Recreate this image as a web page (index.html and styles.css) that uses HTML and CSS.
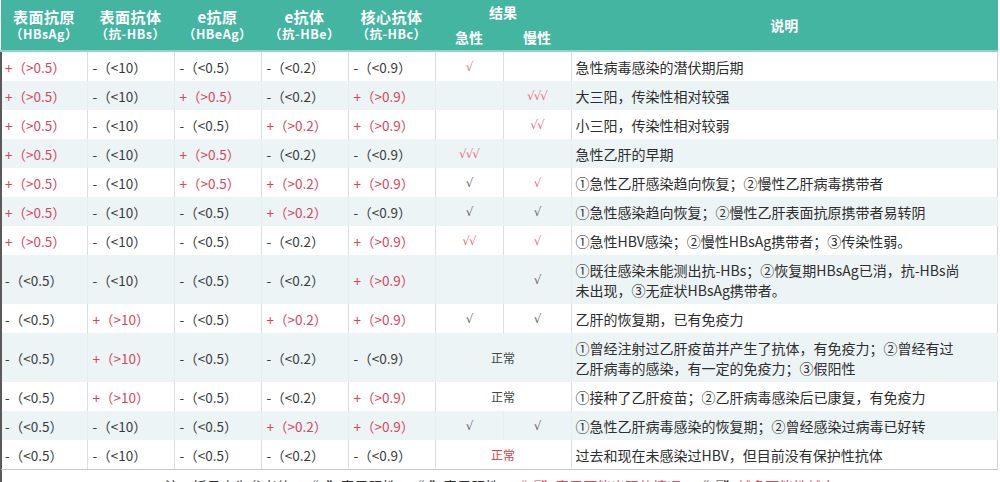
FILE: index.html
```html
<!DOCTYPE html>
<html lang="zh-CN">
<head>
<meta charset="utf-8">
<title>乙肝五项结果说明</title>
<link rel="stylesheet" href="styles.css">
</head>
<body>
<table class="tbl">
  <colgroup>
    <col class="c-val1"><col class="c-val"><col class="c-val"><col class="c-val"><col class="c-val">
    <col class="c-chk"><col class="c-chk"><col class="c-desc">
  </colgroup>
  <thead>
    <tr class="h1">
      <th rowspan="2" class="hd"><span class="hd-main">表面抗原</span><span class="hd-sub">（HBsAg）</span></th>
      <th rowspan="2" class="hd"><span class="hd-main">表面抗体</span><span class="hd-sub">（抗-HBs）</span></th>
      <th rowspan="2" class="hd"><span class="hd-main">e抗原</span><span class="hd-sub">（HBeAg）</span></th>
      <th rowspan="2" class="hd"><span class="hd-main">e抗体</span><span class="hd-sub">（抗-HBe）</span></th>
      <th rowspan="2" class="hd"><span class="hd-main">核心抗体</span><span class="hd-sub">（抗-HBc）</span></th>
      <th colspan="2" class="hd-top">结果</th>
      <th rowspan="2" class="hd-desc">说明</th>
    </tr>
    <tr class="h2">
      <th class="hd-bot">急性</th>
      <th class="hd-bot">慢性</th>
    </tr>
  </thead>
  <tbody>
    <tr>
      <td class="pos">+（>0.5）</td><td>-（<10）</td><td>-（<0.5）</td><td>-（<0.2）</td><td>-（<0.9）</td>
      <td class="chk red">√</td><td class="chk"></td>
      <td class="desc">急性病毒感染的潜伏期后期</td>
    </tr>
    <tr>
      <td class="pos">+（>0.5）</td><td>-（<10）</td><td class="pos">+（>0.5）</td><td>-（<0.2）</td><td class="pos">+（>0.9）</td>
      <td class="chk"></td><td class="chk red">√√√</td>
      <td class="desc">大三阳，传染性相对较强</td>
    </tr>
    <tr>
      <td class="pos">+（>0.5）</td><td>-（<10）</td><td>-（<0.5）</td><td class="pos">+（>0.2）</td><td class="pos">+（>0.9）</td>
      <td class="chk"></td><td class="chk red">√√</td>
      <td class="desc">小三阳，传染性相对较弱</td>
    </tr>
    <tr>
      <td class="pos">+（>0.5）</td><td>-（<10）</td><td class="pos">+（>0.5）</td><td>-（<0.2）</td><td>-（<0.9）</td>
      <td class="chk red">√√√</td><td class="chk"></td>
      <td class="desc">急性乙肝的早期</td>
    </tr>
    <tr>
      <td class="pos">+（>0.5）</td><td>-（<10）</td><td class="pos">+（>0.5）</td><td class="pos">+（>0.2）</td><td class="pos">+（>0.9）</td>
      <td class="chk">√</td><td class="chk red">√</td>
      <td class="desc">①急性乙肝感染趋向恢复；②慢性乙肝病毒携带者</td>
    </tr>
    <tr>
      <td class="pos">+（>0.5）</td><td>-（<10）</td><td>-（<0.5）</td><td class="pos">+（>0.2）</td><td>-（<0.9）</td>
      <td class="chk">√</td><td class="chk">√</td>
      <td class="desc">①急性感染趋向恢复；②慢性乙肝表面抗原携带者易转阴</td>
    </tr>
    <tr>
      <td class="pos">+（>0.5）</td><td>-（<10）</td><td>-（<0.5）</td><td>-（<0.2）</td><td class="pos">+（>0.9）</td>
      <td class="chk red">√√</td><td class="chk red">√</td>
      <td class="desc">①急性HBV感染；②慢性HBsAg携带者；③传染性弱。</td>
    </tr>
    <tr class="tall">
      <td>-（<0.5）</td><td>-（<10）</td><td>-（<0.5）</td><td>-（<0.2）</td><td class="pos">+（>0.9）</td>
      <td class="chk"></td><td class="chk">√</td>
      <td class="desc">①既往感染未能测出抗-HBs；②恢复期HBsAg已消，抗-HBs尚<br>未出现，③无症状HBsAg携带者。</td>
    </tr>
    <tr>
      <td>-（<0.5）</td><td class="pos">+（>10）</td><td>-（<0.5）</td><td class="pos">+（>0.2）</td><td class="pos">+（>0.9）</td>
      <td class="chk">√</td><td class="chk">√</td>
      <td class="desc">乙肝的恢复期，已有免疫力</td>
    </tr>
    <tr class="tall">
      <td>-（<0.5）</td><td class="pos">+（>10）</td><td>-（<0.5）</td><td>-（<0.2）</td><td>-（<0.9）</td>
      <td class="chk zc" colspan="2">正常</td>
      <td class="desc">①曾经注射过乙肝疫苗并产生了抗体，有免疫力；②曾经有过<br>乙肝病毒的感染，有一定的免疫力；③假阳性</td>
    </tr>
    <tr>
      <td>-（<0.5）</td><td class="pos">+（>10）</td><td>-（<0.5）</td><td>-（<0.2）</td><td class="pos">+（>0.9）</td>
      <td class="chk zc" colspan="2">正常</td>
      <td class="desc">①接种了乙肝疫苗；②乙肝病毒感染后已康复，有免疫力</td>
    </tr>
    <tr>
      <td>-（<0.5）</td><td>-（<10）</td><td>-（<0.5）</td><td class="pos">+（>0.2）</td><td class="pos">+（>0.9）</td>
      <td class="chk">√</td><td class="chk">√</td>
      <td class="desc">①急性乙肝病毒感染的恢复期；②曾经感染过病毒已好转</td>
    </tr>
    <tr>
      <td>-（<0.5）</td><td>-（<10）</td><td>-（<0.5）</td><td>-（<0.2）</td><td>-（<0.9）</td>
      <td class="chk zc red-strong" colspan="2">正常</td>
      <td class="desc">过去和现在未感染过HBV，但目前没有保护性抗体</td>
    </tr>
  </tbody>
</table>
<div class="note">注：括号内为参考值，“+”表示阳性，“-”表示阴性，<span class="note-red">“√”表示可能出现的情况，</span>“√”<span class="note-red">越多可能性越大</span></div>
</body>
</html>
```

FILE: styles.css
```css
html, body {
  margin: 0;
  padding: 0;
  background: #ffffff;
}

body {
  font-family: "Noto Sans CJK SC", "Noto Sans", sans-serif;
  color: #333333;
  overflow: hidden;
  text-spacing-trim: space-all;
}

.tbl {
  width: 998px;
  border-collapse: collapse;
  table-layout: fixed;
}

.c-val1 { width: 86px; }
.c-val { width: 87px; }
.c-chk { width: 68px; }
.c-desc { width: auto; }

thead th {
  background: #44b5a1;
  color: #ffffff;
  font-weight: 700;
  padding: 0;
  text-align: center;
  vertical-align: middle;
}

.h1 th[rowspan] { border-bottom: 2px solid #8ed5c6; }

.hd-main {
  display: block;
  font-size: 15px;
  line-height: 17px;
  letter-spacing: 0.5px;
}

.hd-sub {
  display: block;
  font-size: 12.5px;
  line-height: 17px;
  letter-spacing: 0.5px;
}

.hd-top {
  height: 20px;
  font-size: 14px;
  line-height: 16px;
  vertical-align: bottom;
  padding-bottom: 4px;
}

.hd-bot {
  height: 21px;
  font-size: 14px;
  line-height: 16px;
  vertical-align: top;
  padding-top: 5px;
  border-bottom: 2px solid #8ed5c6;
}

.hd-desc {
  font-size: 14px;
}

tbody td {
  height: 29px;
  padding: 0 3px 0 5px;
  font-size: 13.5px;
  line-height: 20px;
  color: #3a3a3a;
  white-space: nowrap;
  border-right: 1px solid #dcdfe2;
  vertical-align: middle;
}

tbody td:first-child {
  border-left: 2px solid #5a5a5a;
  padding-left: 3px;
}

tbody tr:nth-child(even) {
  background: #edf4f6;
}

tbody tr:nth-child(even) td {
  border-right-color: #e6eef1;
}

tbody tr:nth-child(even) td:first-child {
  border-left-color: #5a5a5a;
}

tbody tr.tall td {
  height: 49px;
}

tbody td.pos {
  color: #d94560;
}

tbody td.chk {
  text-align: center;
  padding: 0;
  color: #666666;
  font-family: "DejaVu Sans", sans-serif;
  font-size: 12px;
  letter-spacing: -1px;
}

tbody td.zc {
  font-family: "Noto Sans CJK SC", sans-serif;
  font-size: 12px;
  letter-spacing: 0;
  color: #444444;
}

tbody td.red {
  color: #e6707f;
}

tbody td.red-strong {
  color: #e0393f;
}

tbody td.desc {
  padding-left: 4px;
  font-size: 14px;
  color: #2e2e2e;
  border-right: 1px solid #d4d4d4;
}

.note {
  width: 996px;
  border-top: 1px solid #c8c8c8;
  border-left: 2px solid #5a5a5a;
  padding-top: 6px;
  font-size: 14px;
  line-height: 20px;
  text-align: center;
  color: #333333;
}

.note-red {
  color: #e0485e;
}
```
